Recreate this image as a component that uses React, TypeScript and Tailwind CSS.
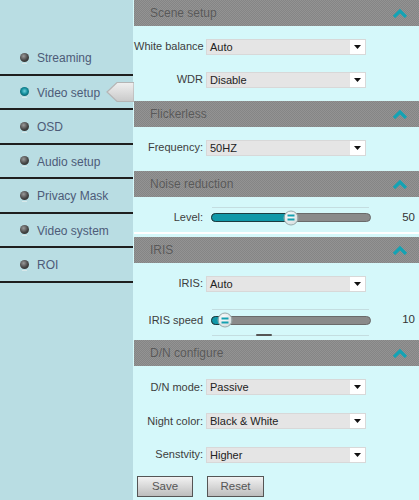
import React from "react";

const FONT = { fontFamily: '"Liberation Sans", Arial, sans-serif' };

function Chevron() {
  return (
    <svg width="16" height="10" viewBox="0 0 16 10" className="block">
      <path d="M2 9 L8 3 L14 9" fill="none" stroke="#13a3b4" strokeWidth="3.2" strokeLinejoin="miter" />
    </svg>
  );
}

function Header({ title }: { title: string }) {
  return (
    <div className="h-[26px] flex items-center justify-between pl-[16px] pr-[11px] bg-[#8b8b8b] bg-[repeating-conic-gradient(#858585_0_25%,#939393_0_50%)] bg-[length:2px_2px]">
      <span className="text-[12px] text-[#585858] [text-shadow:0_0_1px_#9a9a9a]">{title}</span>
      <Chevron />
    </div>
  );
}

function Select({ value }: { value: string }) {
  return (
    <div className="w-[160px] h-[16px] bg-white border border-[#d8d8d8] flex items-stretch">
      <div className="w-[143px] bg-[#e5e5e5] text-[11px] leading-[14px] text-[#222] pl-[3px]">{value}</div>
      <div className="flex-1 flex items-center justify-center">
        <svg width="7" height="4" viewBox="0 0 7 4"><path d="M0 0 H7 L3.5 4 Z" fill="#111" /></svg>
      </div>
    </div>
  );
}

function Row({ label, children, h = 33 }: { label: string; children: React.ReactNode; h?: number }) {
  return (
    <div className="flex items-center gap-[3px]" style={{ height: h }}>
      <div className="w-[69px] text-right text-[11px] text-[#3d3d3d] whitespace-nowrap">{label}</div>
      {children}
    </div>
  );
}

function Slider({ pct, value }: { pct: number; value: string }) {
  return (
    <div className="flex items-center flex-1">
      <div className="relative w-[160px] h-[9px] ml-[5px]">
        <div className="absolute inset-0 rounded-full bg-[#8a8a8a] border border-[#6a6a6a]" />
        <div className="absolute left-0 top-0 bottom-0 rounded-l-full bg-[#0f98a8] border border-[#1c3c40]" style={{ width: `${pct}%` }} />
        <div
          className="absolute top-1/2 w-[15px] h-[15px] -translate-y-1/2 -translate-x-1/2 rounded-full bg-[radial-gradient(circle_at_40%_35%,#ffffff,#c8d4d6)] border border-[#9aa] flex flex-col items-center justify-center gap-[2px]"
          style={{ left: `${pct}%` }}
        >
          <div className="w-[7px] h-[2px] bg-[#15a0b0]" />
          <div className="w-[7px] h-[2px] bg-[#15a0b0]" />
        </div>
      </div>
      <div className="flex-1 text-right pr-[4px] text-[11.5px] text-[#333]">{value}</div>
    </div>
  );
}

const items = ["Streaming", "Video setup", "OSD", "Audio setup", "Privacy Mask", "Video system", "ROI"];

function Bullet({ active }: { active: boolean }) {
  return (
    <div className="relative w-[9px] h-[11px]">
      <div
        className={
          active
            ? "w-[9px] h-[9px] rounded-full bg-[radial-gradient(circle_at_50%_45%,#6fd0dc_0,#138d9c_45%,#0c3c44_100%)]"
            : "w-[9px] h-[9px] rounded-full bg-[radial-gradient(circle_at_40%_35%,#9a9a9a_0,#444_55%,#222_100%)]"
        }
      />
      <div className="absolute left-[2px] top-[10px] w-[5px] h-[1px] bg-[#d8e8ea]" />
    </div>
  );
}

export default function App() {
  return (
    <div className="w-[419px] h-[500px] flex overflow-hidden" style={FONT}>
      <div className="relative w-[133px] h-full bg-[#b9dde3] pt-[41px]">
        {items.map((it, i) => (
          <div key={it} className="h-[34.5px] border-b-2 border-[#1e1e1e] flex items-center pl-[20px] gap-[8px] pt-[2px]">
            <Bullet active={i === 1} />
            <span className="text-[12px] text-[#4d5b78]">{it}</span>
          </div>
        ))}
        <svg className="absolute left-[106px] top-[81px]" width="28" height="22" viewBox="0 0 28 22">
          <defs>
            <linearGradient id="ag" x1="0" y1="0" x2="0" y2="1">
              <stop offset="0" stopColor="#f0f0f0" />
              <stop offset="1" stopColor="#c9c9c9" />
            </linearGradient>
          </defs>
          <polygon points="1,11 11,1.5 28,1.5 28,20.5 11,20.5" fill="url(#ag)" stroke="#b5b5b5" strokeWidth="1.2" />
        </svg>
      </div>
      <div className="flex-1 h-full bg-[#d5f8fa] pl-[1px]">
        <Header title="Scene setup" />
        <div className="h-[75px] pt-[4px]">
          <Row label="White balance"><Select value="Auto" /></Row>
          <Row label="WDR"><Select value="Disable" /></Row>
        </div>
        <Header title="Flickerless" />
        <div className="h-[44px] pt-[4px]">
          <Row label="Frequency:"><Select value="50HZ" /></Row>
        </div>
        <Header title="Noise reduction" />
        <div className="h-[40px] relative">
          <div className="absolute left-[78px] w-[157px] top-[10px] h-[1px] bg-[#c4dde0]" />
          <div className="pt-[4px]">
            <Row label="Level:"><Slider pct={50} value="50" /></Row>
          </div>
          <div className="absolute left-0 right-0 bottom-[3px] h-[2px] bg-white" />
        </div>
        <Header title="IRIS" />
        <div className="h-[77px] relative pt-[4px]">
          <Row label="IRIS:"><Select value="Auto" /></Row>
          <div className="absolute left-[78px] w-[157px] top-[46px] h-[1px] bg-[#c4dde0]" />
          <Row label="IRIS speed" h={40}><Slider pct={9} value="10" /></Row>
          <div className="absolute left-[78px] w-[157px] top-[72px] h-[1px] bg-[#c4dde0]" />
          <div className="absolute left-[122px] w-[16px] top-[71px] h-[2px] rounded-full bg-[#555]" />
        </div>
        <Header title="D/N configure" />
        <div className="pt-[4px]">
          <Row label="D/N mode:" h={34}><Select value="Passive" /></Row>
          <Row label="Night color:" h={34}><Select value="Black & White" /></Row>
          <Row label="Senstvity:" h={33}><Select value="Higher" /></Row>
          <div className="flex gap-[14px] pl-[3px] pt-[5px]">
            <button className="w-[56px] h-[21px] border border-[#555] bg-[linear-gradient(#f2f2f2,#bdbdbd)] text-[11.5px] text-[#555]">Save</button>
            <button className="w-[57px] h-[21px] border border-[#555] bg-[linear-gradient(#f2f2f2,#bdbdbd)] text-[11.5px] text-[#555]">Reset</button>
          </div>
        </div>
      </div>
    </div>
  );
}
